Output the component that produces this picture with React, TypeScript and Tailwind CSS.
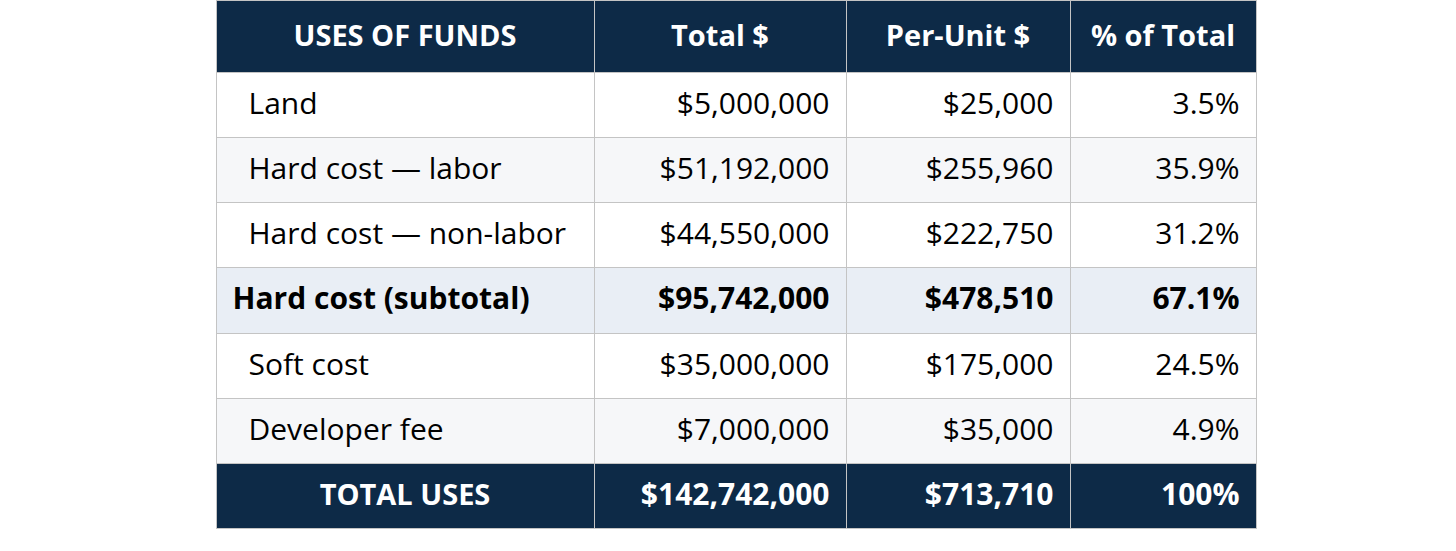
const rows = [
  { label: "Land", total: "$5,000,000", unit: "$25,000", pct: "3.5%", tone: "plain" },
  { label: "Hard cost — labor", total: "$51,192,000", unit: "$255,960", pct: "35.9%", tone: "alt" },
  { label: "Hard cost — non-labor", total: "$44,550,000", unit: "$222,750", pct: "31.2%", tone: "plain" },
  { label: "Hard cost (subtotal)", total: "$95,742,000", unit: "$478,510", pct: "67.1%", tone: "sub" },
  { label: "Soft cost", total: "$35,000,000", unit: "$175,000", pct: "24.5%", tone: "plain" },
  { label: "Developer fee", total: "$7,000,000", unit: "$35,000", pct: "4.9%", tone: "alt" },
];

const rowBg: Record<string, string> = {
  plain: "bg-white",
  alt: "bg-[#f6f7f9]",
  sub: "bg-[#e9eef5] font-bold",
};

export default function App() {
  return (
    <div className="flex h-[551px] w-full justify-center bg-white pl-4 font-['Open_Sans',sans-serif] text-[30px] leading-none text-black">
      <table className="h-[529px] w-[1040px] table-fixed border-collapse border border-[#c4c4c4]">
        <colgroup>
          <col className="w-[378px]" />
          <col className="w-[252px]" />
          <col className="w-[224px]" />
          <col className="w-[186px]" />
        </colgroup>
        <thead>
          <tr className="h-[72px] bg-[#0d2a47] text-[29px] font-bold text-white">
            <th className="border border-[#c4c4c4] pb-1 text-center">USES OF FUNDS</th>
            <th className="border border-[#c4c4c4] pb-1 text-center">Total $</th>
            <th className="border border-[#c4c4c4] pb-1 text-center">Per-Unit $</th>
            <th className="border border-[#c4c4c4] pb-1 text-center">% of Total</th>
          </tr>
        </thead>
        <tbody>
          {rows.map((r) => (
            <tr key={r.label} className={`h-[65px] ${rowBg[r.tone]}`}>
              <td className={`border border-[#c4c4c4] pb-1 ${r.tone === "sub" ? "pl-4" : "pl-8"}`}>{r.label}</td>
              <td className="border border-[#c4c4c4] pr-4 pb-1 text-right">{r.total}</td>
              <td className="border border-[#c4c4c4] pr-4 pb-1 text-right">{r.unit}</td>
              <td className="border border-[#c4c4c4] pr-4 pb-1 text-right">{r.pct}</td>
            </tr>
          ))}
          <tr className="h-[65px] bg-[#0d2a47] font-bold text-white">
            <td className="border border-[#c4c4c4] pb-1 text-center text-[29px]">TOTAL USES</td>
            <td className="border border-[#c4c4c4] pr-4 pb-1 text-right">$142,742,000</td>
            <td className="border border-[#c4c4c4] pr-4 pb-1 text-right">$713,710</td>
            <td className="border border-[#c4c4c4] pr-4 pb-1 text-right">100%</td>
          </tr>
        </tbody>
      </table>
    </div>
  );
}
